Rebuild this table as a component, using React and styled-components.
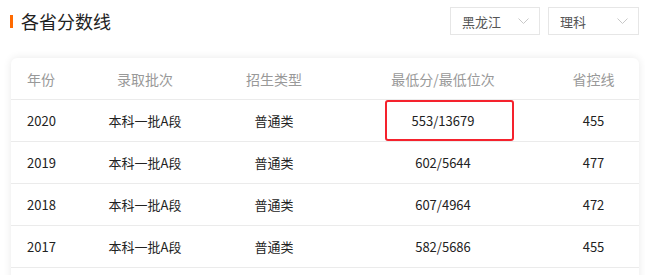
import React from 'react';
import styled, { createGlobalStyle } from 'styled-components';

const GlobalStyle = createGlobalStyle`
  body {
    margin: 0;
    background: #fff;
    font-family: "Noto Sans CJK SC", "Noto Sans", sans-serif;
    color: #222;
  }
`;

const Page = styled.div`
  padding: 7px 6px 0 10px;
`;

const TopBar = styled.div`
  display: flex;
  align-items: center;
  justify-content: space-between;
  height: 28px;
`;

const Title = styled.h2`
  display: flex;
  align-items: center;
  gap: 8px;
  margin: 0;
  font-size: 18px;
  font-weight: 400;
  color: #222;

  &::before {
    content: '';
    width: 3px;
    height: 13px;
    background: #ff6a00;
  }
`;

const Filters = styled.div`
  display: flex;
  gap: 8px;
`;

const Select = styled.div`
  box-sizing: border-box;
  display: flex;
  align-items: center;
  justify-content: space-between;
  width: ${({ width }) => width}px;
  height: 28px;
  padding: 0 10px 0 11px;
  border: 1px solid #e6e6e6;
  font-size: 13px;
  color: #555;
`;

const Card = styled.div`
  margin: 23px 0 0 1px;
  padding-bottom: 20px;
  background: #fff;
  border-radius: 6px;
  box-shadow: 0 0 8px rgba(0, 0, 0, 0.09);
`;

const Row = styled.div`
  display: grid;
  grid-template-columns: 69px 130px 128px 210px 1fr;
  height: 42px;
  align-items: center;
  border-bottom: 1px solid #ebebeb;
  box-sizing: border-box;
  font-size: ${({ head }) => (head ? 14 : 13)}px;
  color: ${({ head }) => (head ? '#999' : '#222')};
`;

const Cell = styled.div`
  position: relative;
  height: 100%;
  display: flex;
  align-items: center;
  justify-content: ${({ left }) => (left ? 'flex-start' : 'center')};
  padding-left: ${({ left }) => (left ? '16px' : '0')};
`;

const Highlight = styled.span`
  position: absolute;
  left: 47px;
  top: 0;
  width: 129px;
  height: 41px;
  box-sizing: border-box;
  border: 2px solid #f5222d;
  border-radius: 3px;
`;

const Chevron = () => (
  <svg width="11" height="6" viewBox="0 0 11 6" fill="none">
    <path d="M0.5 0.5 L5.5 5.5 L10.5 0.5" stroke="#c8c8c8" strokeWidth="1" />
  </svg>
);

const rows = [
  ['2020', '本科一批A段', '普通类', '553/13679', '455'],
  ['2019', '本科一批A段', '普通类', '602/5644', '477'],
  ['2018', '本科一批A段', '普通类', '607/4964', '472'],
  ['2017', '本科一批A段', '普通类', '582/5686', '455'],
];

const App = () => (
  <>
    <GlobalStyle />
    <Page>
      <TopBar>
        <Title>各省分数线</Title>
        <Filters>
          <Select width={90}>
            黑龙江
            <Chevron />
          </Select>
          <Select width={91}>
            理科
            <Chevron />
          </Select>
        </Filters>
      </TopBar>

      <Card>
        <Row head>
          <Cell left>年份</Cell>
          <Cell>录取批次</Cell>
          <Cell>招生类型</Cell>
          <Cell>最低分/最低位次</Cell>
          <Cell>省控线</Cell>
        </Row>
        {rows.map((r, i) => (
          <Row key={r[0]}>
            <Cell left>{r[0]}</Cell>
            <Cell>{r[1]}</Cell>
            <Cell>{r[2]}</Cell>
            <Cell>
              {i === 0 && <Highlight />}
              {r[3]}
            </Cell>
            <Cell>{r[4]}</Cell>
          </Row>
        ))}
      </Card>
    </Page>
  </>
);

export default App;
